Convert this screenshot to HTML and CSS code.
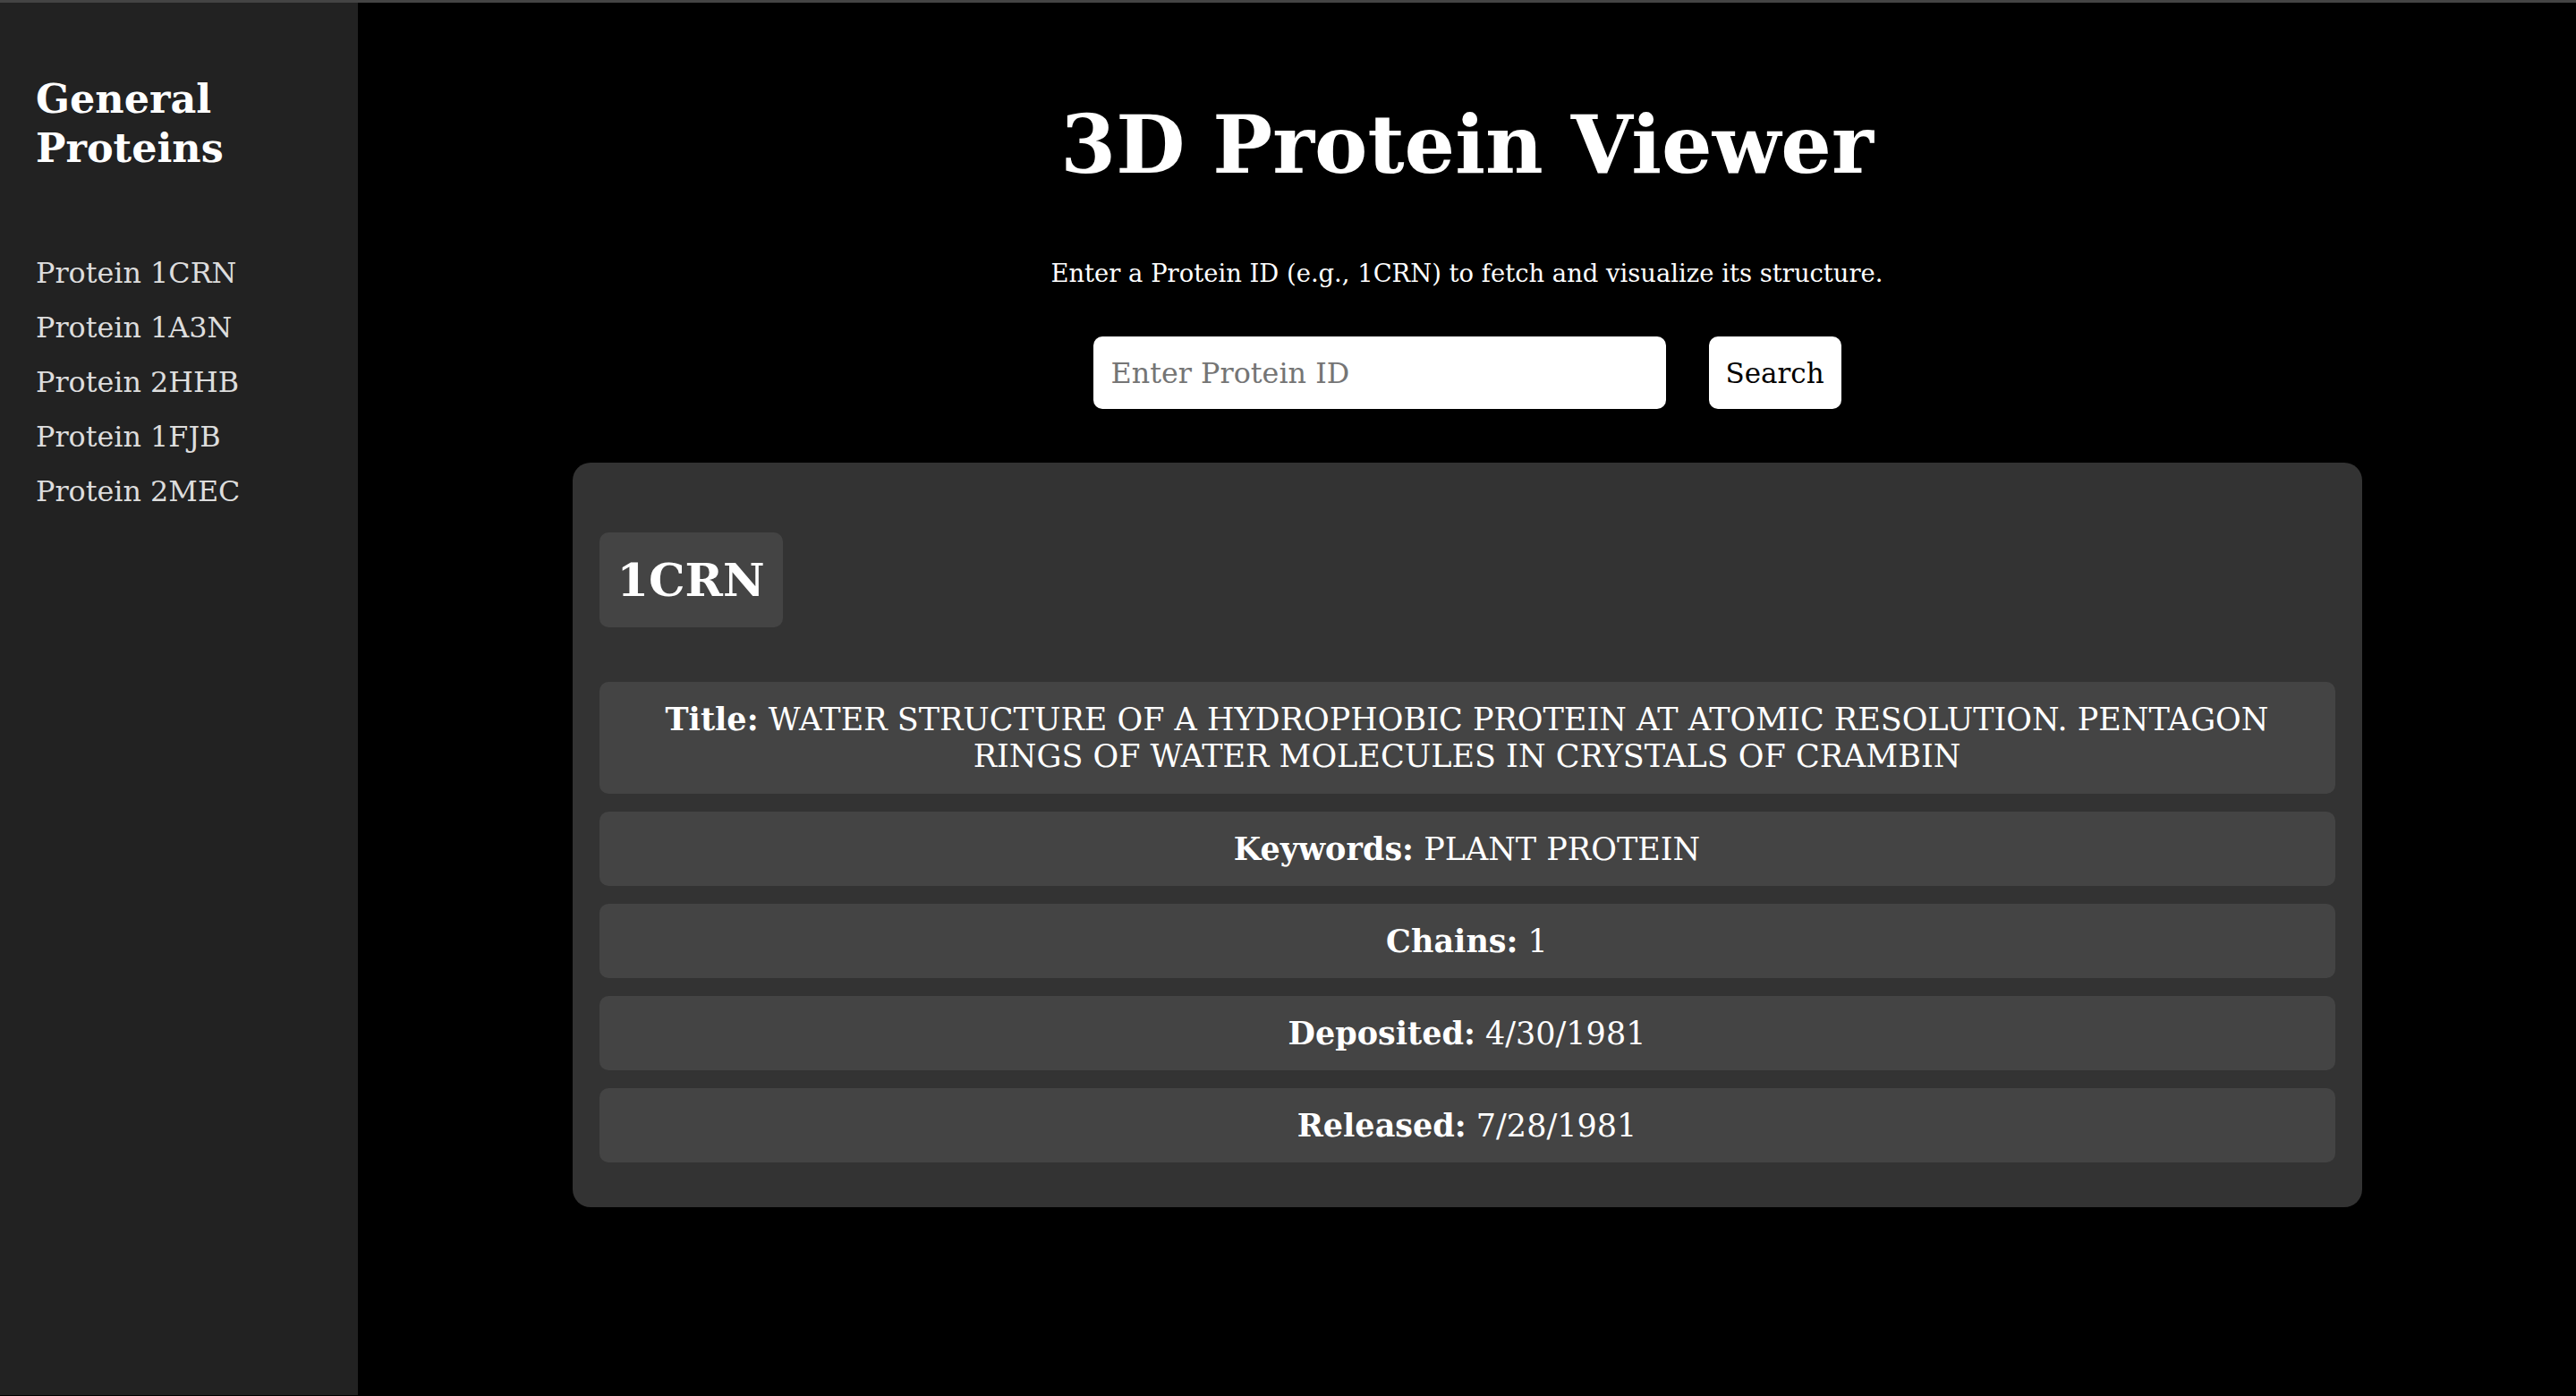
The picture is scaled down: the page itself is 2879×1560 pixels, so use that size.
FILE: index.html
```html
<!DOCTYPE html>
<html lang="en">
<head>
<meta charset="utf-8">
<title>3D Protein Viewer</title>
<link rel="stylesheet" href="styles.css">
</head>
<body>
  <aside class="sidebar">
    <h2 class="sidebar-title">General Proteins</h2>
    <ul class="protein-list">
      <li><a href="#">Protein 1CRN</a></li>
      <li><a href="#">Protein 1A3N</a></li>
      <li><a href="#">Protein 2HHB</a></li>
      <li><a href="#">Protein 1FJB</a></li>
      <li><a href="#">Protein 2MEC</a></li>
    </ul>
  </aside>
  <main class="main">
    <h1 class="page-title">3D Protein Viewer</h1>
    <p class="subtitle">Enter a Protein ID (e.g., 1CRN) to fetch and visualize its structure.</p>
    <div class="search-row">
      <input class="search-input" type="text" placeholder="Enter Protein ID">
      <button class="search-button" type="button">Search</button>
    </div>
    <section class="card">
      <h2 class="protein-id">1CRN</h2>
      <div class="info-list">
        <p class="info-row"><strong>Title:</strong> WATER STRUCTURE OF A HYDROPHOBIC PROTEIN AT ATOMIC RESOLUTION. PENTAGON RINGS OF WATER MOLECULES IN CRYSTALS OF CRAMBIN</p>
        <p class="info-row"><strong>Keywords:</strong> PLANT PROTEIN</p>
        <p class="info-row"><strong>Chains:</strong> 1</p>
        <p class="info-row"><strong>Deposited:</strong> 4/30/1981</p>
        <p class="info-row"><strong>Released:</strong> 7/28/1981</p>
      </div>
    </section>
  </main>
</body>
</html>
```

FILE: styles.css
```css
html, body {
  margin: 0;
  padding: 0;
}

body {
  background: #000;
  color: #fff;
  font-family: "DejaVu Serif", Georgia, serif;
  border-top: 3px solid #444;
  display: flex;
  align-items: flex-start;
  height: calc(100vh - 3px);
  overflow: hidden;
}

.sidebar {
  width: 400px;
  flex: 0 0 400px;
  box-sizing: border-box;
  height: calc(100vh - 4px);
  background: #222;
  padding: 40px;
}

.sidebar-title {
  margin: 40px 0 0;
  font-size: 44.5px;
  line-height: 55px;
  font-weight: bold;
  color: #fff;
}

.protein-list {
  list-style: none;
  margin: 91px 0 0;
  padding: 0;
}

.protein-list li {
  font-size: 31.8px;
  line-height: 41px;
  margin-bottom: 20px;
}

.protein-list a {
  color: #ddd;
  text-decoration: none;
}

.main {
  flex: 1;
  padding: 0 40px;
  text-align: center;
  display: flex;
  flex-direction: column;
  align-items: center;
}

.page-title {
  margin: 104px 0 0;
  font-size: 89px;
  line-height: 109px;
  font-weight: bold;
}

.subtitle {
  margin: 72px 0 0;
  font-size: 27.4px;
  line-height: 36px;
}

.search-row {
  margin-top: 52px;
  display: flex;
  gap: 48px;
}

.search-input {
  width: 640px;
  height: 81px;
  box-sizing: border-box;
  border: none;
  border-radius: 10px;
  padding: 0 20px;
  font-family: inherit;
  font-size: 31.8px;
  color: #000;
  background: #fff;
  outline: none;
}

.search-input::placeholder {
  color: #757575;
}

.search-button {
  width: 148px;
  height: 81px;
  border: none;
  border-radius: 10px;
  background: #fff;
  color: #000;
  font-family: inherit;
  font-size: 31px;
  padding: 0;
}

.card {
  margin-top: 60px;
  width: 2000px;
  box-sizing: border-box;
  background: #333;
  border-radius: 20px;
  padding: 30px 30px 50px;
  text-align: left;
}

.protein-id {
  display: inline-block;
  margin: 48px 0 0;
  padding: 20px;
  background: #444;
  border-radius: 10px;
  font-size: 51px;
  line-height: 66px;
  font-weight: bold;
}

.info-list {
  margin-top: 61px;
  display: flex;
  flex-direction: column;
  gap: 20px;
}

.info-row {
  margin: 0;
  background: #444;
  border-radius: 10px;
  height: 83px;
  box-sizing: border-box;
  padding: 21px 20px;
  font-size: 35px;
  line-height: 41px;
  text-align: center;
  color: #fff;
}

.info-row:first-child {
  height: 125px;
}

.info-row strong {
  font-weight: bold;
}
```
